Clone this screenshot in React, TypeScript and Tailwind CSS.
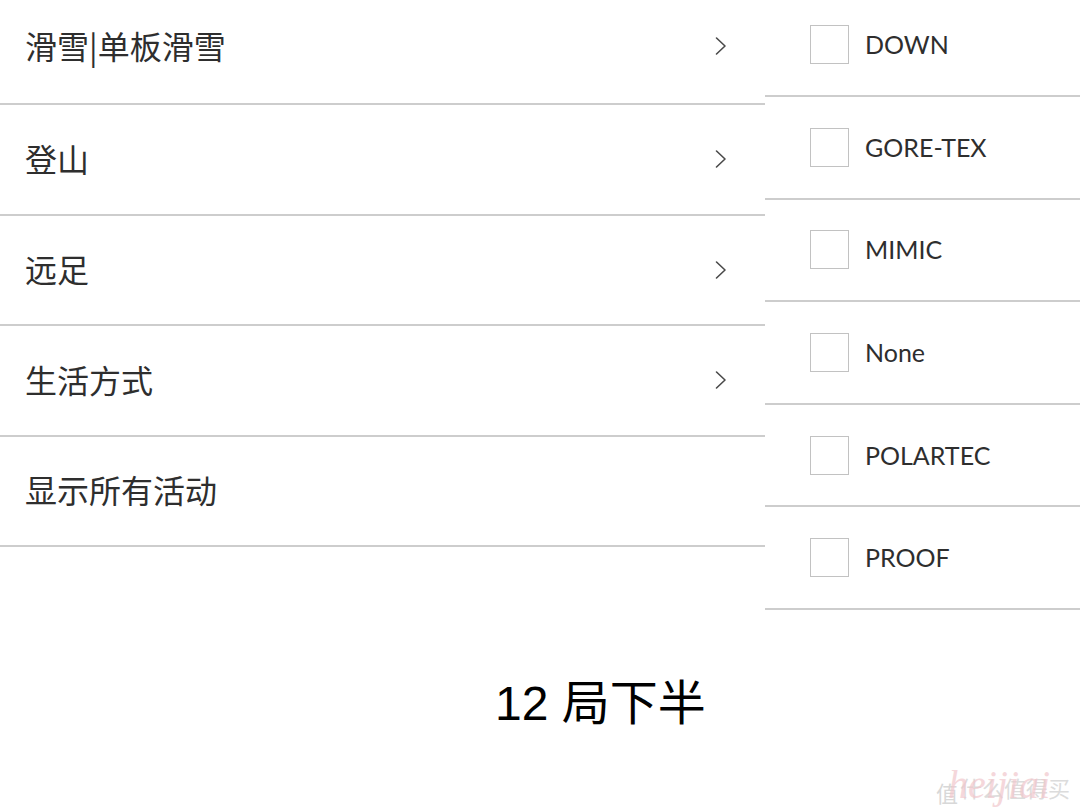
import React from "react";

const cjk = { fontFamily: '"Noto Sans CJK SC", "Noto Sans", sans-serif' };
const latin = { fontFamily: 'Lato, "Noto Sans", sans-serif' };

function Chevron() {
  return (
    <svg width="14" height="20" viewBox="0 0 14 20" fill="none" className="mr-[37px]">
      <path d="M2.5 2 L11 10 L2.5 18" stroke="#4a4a4a" strokeWidth="1.6" strokeLinecap="round" strokeLinejoin="round" />
    </svg>
  );
}

const leftItems = [
  { label: "滑雪|单板滑雪", chevron: true },
  { label: "登山", chevron: true },
  { label: "远足", chevron: true },
  { label: "生活方式", chevron: true },
  { label: "显示所有活动", chevron: false },
];

const rightItems = ["DOWN", "GORE-TEX", "MIMIC", "None", "POLARTEC", "PROOF"];

export default function App() {
  return (
    <div className="relative w-[1080px] h-[811px] bg-white overflow-hidden">
      <div className="flex">
        <div className="w-[765px] flex flex-col">
          {leftItems.map((it, i) => (
            <div
              key={it.label}
              className={`flex items-center justify-between border-b-2 border-[#cdcdcd] ${i === 0 ? "h-[105px]" : "h-[110.5px]"}`}
            >
              <span
                className={`pl-[25px] text-[32px] text-[#2e2e2e] leading-none ${i === 0 ? "-mt-[14px]" : "-mt-[3px]"}`}
                style={cjk}
              >
                {it.label}
              </span>
              {it.chevron && (
                <span className={i === 0 ? "-mt-[12px]" : ""}>
                  <Chevron />
                </span>
              )}
            </div>
          ))}
        </div>
        <div className="flex-1 flex flex-col">
          {rightItems.map((t, i) => (
            <div
              key={t}
              className={`flex items-center border-b-2 border-[#cdcdcd] ${i === 0 ? "h-[97px]" : "h-[102.6px]"}`}
            >
              <div className={`flex items-center ${i === 0 ? "-mt-[7px]" : ""}`}>
                <div className="ml-[45px] w-[39px] h-[39px] border-[1.5px] border-[#c2c2c2] bg-white" />
                <span className="ml-[16px] text-[25px] text-[#2e2e2e] leading-none" style={latin}>
                  {t}
                </span>
              </div>
            </div>
          ))}
        </div>
      </div>
      <div className="pl-[495px] pt-[70px]">
        <span
          className="text-[48px] text-black leading-none"
          style={{ fontFamily: '"Liberation Sans", "Noto Sans CJK SC", sans-serif' }}
        >
          12 局下半
        </span>
      </div>
      <div className="absolute right-[10px] bottom-[8px] flex items-end">
        <span className="text-[22px] text-[#d8d8d8] leading-none" style={cjk}>
          值
        </span>
        <span className="relative ml-[2px]">
          <span className="text-[22px] text-[#dcdcdc] leading-none" style={cjk}>
            什么值得买
          </span>
          <span
            className="absolute left-[-12px] bottom-[-2px] text-[40px] text-[#f1c7cc] italic leading-none opacity-70"
            style={{ fontFamily: '"Liberation Serif", serif' }}
          >
            heijiai
          </span>
        </span>
      </div>
    </div>
  );
}
